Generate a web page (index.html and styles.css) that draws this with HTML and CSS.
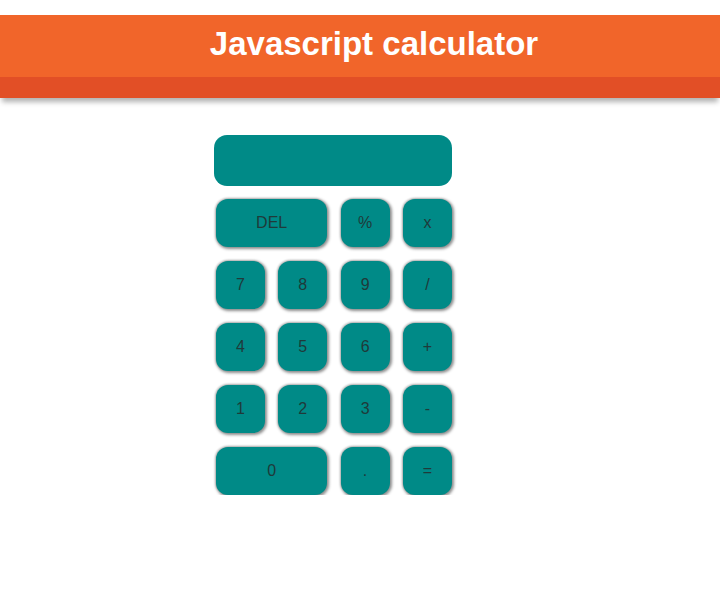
FILE: index.html
```html
<!DOCTYPE html>
<html>
<head>
<meta charset="utf-8">
<title>Javascript calculator</title>
<link rel="stylesheet" href="styles.css">
</head>
<body>
<header class="header">
  <div class="header-top"><h1 class="title">Javascript calculator</h1></div>
  <div class="header-band"></div>
</header>
<main class="calc">
  <div class="display"></div>
  <div class="keys">
    <button class="key wide">DEL</button>
    <button class="key">%</button>
    <button class="key">x</button>
    <button class="key">7</button>
    <button class="key">8</button>
    <button class="key">9</button>
    <button class="key">/</button>
    <button class="key">4</button>
    <button class="key">5</button>
    <button class="key">6</button>
    <button class="key">+</button>
    <button class="key">1</button>
    <button class="key">2</button>
    <button class="key">3</button>
    <button class="key">-</button>
    <button class="key wide">0</button>
    <button class="key">.</button>
    <button class="key">=</button>
  </div>
</main>
</body>
</html>
```
FILE: styles.css
```css
html, body {
  margin: 0;
  padding: 0;
  background: #ffffff;
  font-family: "Liberation Sans", Arial, sans-serif;
}
.header {
  margin-top: 15px;
  box-shadow: 0 6px 5px -2px rgba(0, 0, 0, 0.3);
}
.header-top {
  background: #f1652a;
  height: 62px;
  display: flex;
  align-items: center;
  justify-content: center;
  padding-left: 28px;
}
.title {
  margin: 0;
  color: #ffffff;
  font-size: 33px;
  font-weight: bold;
  line-height: 1;
  padding-bottom: 6px;
}
.header-band {
  background: #e24f26;
  height: 21px;
}
.calc {
  width: 238px;
  margin: 37px 0 0 214px;
}
.display {
  height: 51px;
  background: #008a87;
  border-radius: 13px;
}
.keys {
  margin: 13px 0 0 2px;
  display: grid;
  grid-template-columns: repeat(4, 49px);
  grid-auto-rows: 48px;
  column-gap: 13.3px;
  row-gap: 14px;
}
.key {
  background: #008a87;
  border: none;
  border-radius: 12px;
  color: #1f3a3a;
  font-family: "Liberation Sans", Arial, sans-serif;
  font-size: 16px;
  padding: 0;
  box-shadow: 1px 1px 3px 1px rgba(0, 0, 0, 0.45), -1px -1px 2px rgba(0, 0, 0, 0.15);
}
.wide {
  grid-column: span 2;
}
```
